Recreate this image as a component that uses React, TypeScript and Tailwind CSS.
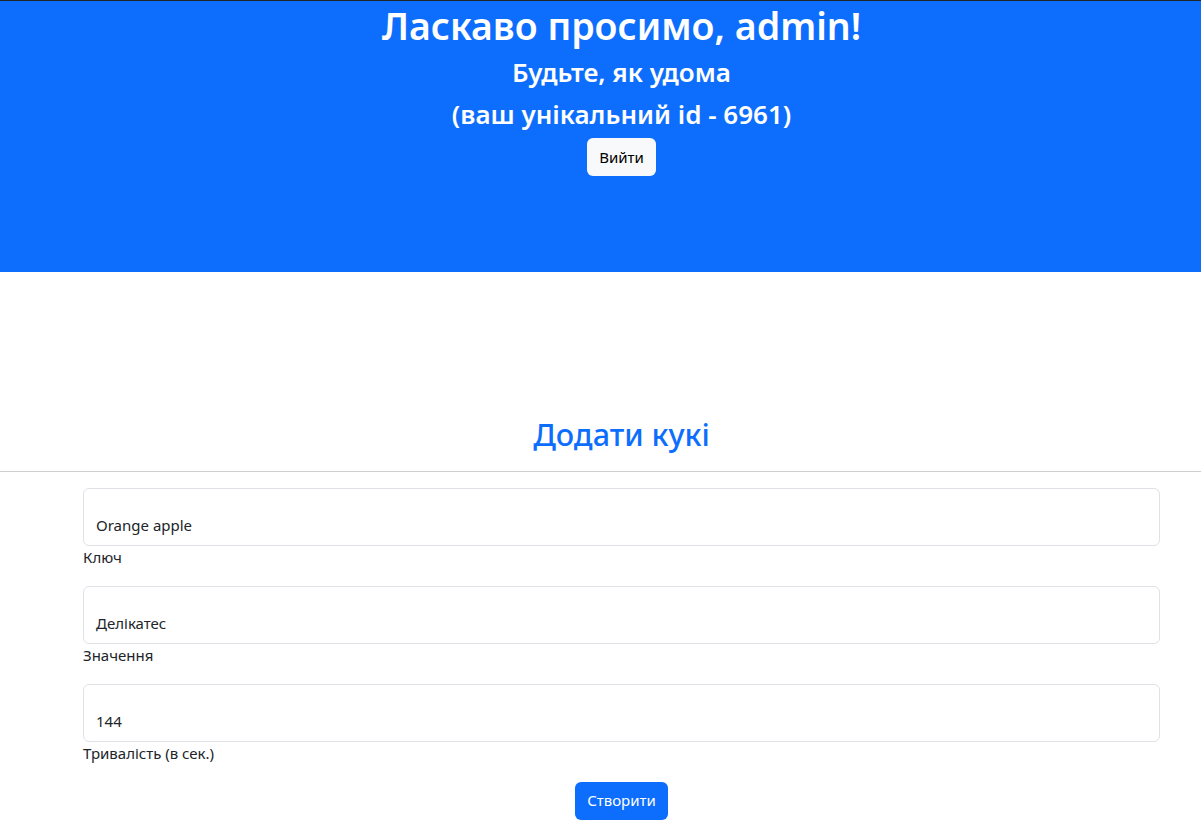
export default function App() {
  const fields = [
    { value: "Orange apple", label: "Ключ" },
    { value: "Делікатес", label: "Значення" },
    { value: "144", label: "Тривалість (в сек.)" },
  ];

  return (
    <div className="min-h-[840px] bg-white text-[#212529]" style={{ fontFamily: '"Noto Sans", "Open Sans", sans-serif' }}>
      <header className="h-[272px] bg-[#0d6efd] border-t border-[#212529] pl-[42px] pt-[2px] text-center text-white">
        <h1 className="text-[37.5px] font-semibold leading-[1.2] mb-[9px]">Ласкаво просимо, admin!</h1>
        <h3 className="text-[26px] font-semibold leading-[1.2] mb-[11px]">Будьте, як удома</h3>
        <h3 className="text-[26px] font-semibold leading-[1.2] mb-[8px]">(ваш унікальний id - 6961)</h3>
        <button className="h-[38px] px-3 rounded-[6px] bg-[#f8f9fa] text-[#000] text-[15px]">Вийти</button>
      </header>

      <section className="pt-[144px]">
        <h2 className="pl-[42px] text-center text-[30.5px] font-medium leading-[1.2] text-[#0d6efd]">Додати кукі</h2>
        <hr className="mt-[18px] border-0 border-t border-[#cfcfcf]" />

        <form className="pr-[41px] pl-[83px] pt-[16px]">
          {fields.map((f) => (
            <div key={f.label} className="mb-[17.5px]">
              <div className="h-[58px] rounded-[6px] border border-[#dee2e6] px-3 pt-[25px] text-[15px] leading-[1.5]">
                {f.value}
              </div>
              <div className="text-[15px] leading-[1.5]">{f.label}</div>
            </div>
          ))}
          <div className="text-center">
            <button type="button" className="h-[38px] px-3 rounded-[6px] bg-[#0d6efd] text-white text-[15px]">
              Створити
            </button>
          </div>
        </form>
      </section>
    </div>
  );
}
